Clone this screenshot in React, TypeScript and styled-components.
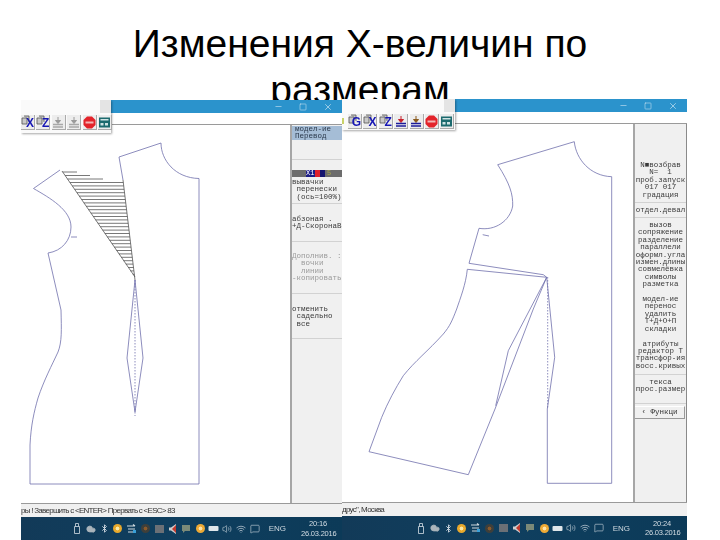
import type { ReactNode } from 'react';
import { Bluetooth, Cloud, MessageSquare, Minus, Square, Volume2, Wifi, X } from 'lucide-react';
import styled, { createGlobalStyle } from 'styled-components';

const GlobalStyle = createGlobalStyle`
    html, body {
        margin: 0;
        padding: 0;
        background: #fff;
        overflow: hidden;
    }
`;

const Slide = styled.div`
    width: 720px;
    height: 540px;
    overflow: hidden;
    font-family: "Liberation Sans", Arial, sans-serif;
`;

const Titre = styled.h1`
    margin: 0;
    padding: 21px 100px 0;
    height: 99px;
    box-sizing: border-box;
    font-size: 39px;
    line-height: 46px;
    font-weight: 400;
    text-align: center;
    color: #000;
`;

const Ecrans = styled.div`
    position: relative;
    display: flex;
    align-items: flex-end;
    height: 441px;
    padding-left: 21px;
`;

const Ecran = styled.div<{ $largeur: number; $hauteur: number }>`
    position: relative;
    display: flex;
    flex-direction: column;
    flex: none;
    width: ${({ $largeur }) => $largeur}px;
    height: ${({ $hauteur }) => $hauteur}px;
    overflow: hidden;
    background: #fff;
    filter: blur(0.35px);
`;

const BarreTitre = styled.div`
    flex: none;
    height: 13px;
    display: flex;
    justify-content: flex-end;
    align-items: center;
    gap: 16px;
    padding-right: 9px;
    background: #2b93cc;
    color: #dcecf6;
`;

const BarreMenu = styled.div`
    flex: none;
    height: 11px;
    background: #fff;
`;

const Travail = styled.div`
    flex: none;
    height: 380px;
    display: flex;
    border-top: 1px solid #9a9a9a;
    border-bottom: 1px solid #9a9a9a;
    box-sizing: border-box;
`;

const Canevas = styled.div`
    flex: 1;
    min-width: 0;
    background: #fff;
    svg {
        display: block;
    }
`;

const Panneau = styled.div<{ $bordDroit?: boolean }>`
    flex: none;
    width: ${({ $bordDroit }) => ($bordDroit ? 51 : 50)}px;
    display: flex;
    flex-direction: column;
    overflow: hidden;
    background: #f0f0f0;
    border-left: 2px solid #a6a6a6;
    border-right: ${({ $bordDroit }) => ($bordDroit ? '1px solid #8a8a8a' : 'none')};
    font-family: "Liberation Mono", monospace;
    font-size: 7.5px;
    line-height: 7.4px;
    color: #333;
`;

const Section = styled.div<{ $hauteur: number; $haut?: number; $centre?: boolean; $gris?: boolean; $sansLigne?: boolean }>`
    flex: none;
    box-sizing: border-box;
    height: ${({ $hauteur }) => $hauteur}px;
    padding-top: ${({ $haut = 0 }) => $haut}px;
    white-space: pre;
    text-align: ${({ $centre }) => ($centre ? 'center' : 'left')};
    color: ${({ $gris }) => ($gris ? '#9a9a9a' : '#3a3a3a')};
    border-bottom: ${({ $sansLigne }) => ($sansLigne ? 'none' : '1px solid #d2d2d2')};
`;

const Surligne = styled.div`
    height: 14px;
    margin-top: 1px;
    background: #a5bdd6;
    color: #2c3a4c;
    padding-left: 3px;
`;

const BarreCouleur = styled.div`
    display: flex;
    height: 7px;
    margin-bottom: 2px;
    background: #6c6c6c;
    padding-left: 14px;
    font-size: 7px;
    line-height: 7px;
`;

const Case = styled.span<{ $fond: string; $largeur: number }>`
    width: ${({ $largeur }) => $largeur}px;
    background: ${({ $fond }) => $fond};
    color: #fff;
`;

const Chiffre = styled.span`
    margin-left: 2px;
    color: #a8a84a;
`;

const BoutonFonctions = styled.div`
    height: 11px;
    margin: 2px 1px 0 0;
    line-height: 11px;
    text-align: center;
    background: #f0f0f0;
    border-right: 1px solid #999;
    border-bottom: 1px solid #999;
    border-top: 1px solid #fff;
`;

const Statut = styled.div`
    flex: none;
    height: 13px;
    line-height: 14px;
    background: #f0f0f0;
    font-size: 8px;
    letter-spacing: -0.73px;
    color: #333;
    white-space: pre;
    overflow: hidden;
`;

const BarreTaches = styled.div<{ $separateur?: boolean }>`
    flex: 1;
    display: flex;
    align-items: center;
    justify-content: flex-end;
    padding-right: ${({ $separateur }) => ($separateur ? 7 : 8)}px;
    background: linear-gradient(90deg, #123a58, #0f3f5f 50%, #0c3a58);
    color: #d4dde4;
`;

const Zone = styled.span`
    flex: none;
    width: 13.7px;
    display: flex;
    justify-content: center;
    align-items: center;
`;

const Pastille = styled.span<{ $couleur: string; $centre: string }>`
    width: 9px;
    height: 9px;
    border-radius: 50%;
    background: radial-gradient(circle, ${({ $centre }) => $centre} 25%, ${({ $couleur }) => $couleur} 35%);
`;

const Carre = styled.span<{ $couleur: string }>`
    width: 9px;
    height: 8px;
    background: ${({ $couleur }) => $couleur};
`;

const Langue = styled.span`
    margin-left: 7px;
    font-size: 8px;
    color: #cfd9e0;
`;

const Horloge = styled.div`
    width: 34px;
    margin-left: 15px;
    font-size: 7.5px;
    letter-spacing: -0.2px;
    line-height: 9.5px;
    text-align: center;
    color: #d4dde4;
    white-space: nowrap;
`;

const Flottant = styled.div<{ $largeur: number; $hauteur: number }>`
    position: absolute;
    top: 0;
    left: 0;
    width: ${({ $largeur }) => $largeur}px;
    height: ${({ $hauteur }) => $hauteur}px;
    background: #fafafa;
    box-shadow: 1px 1px 2px rgba(0, 0, 0, 0.35);
`;

const Poignee = styled.div`
    position: absolute;
    top: 0;
    right: 0;
    width: 11px;
    height: 13px;
    background: #e4e4e4;
`;

const Outils = styled.div<{ $retrait: number }>`
    position: absolute;
    top: 15px;
    left: ${({ $retrait }) => $retrait}px;
    display: flex;
    gap: 1.4px;
`;

const Reste = styled.div`
    position: absolute;
    top: 19px;
    left: 0;
    width: 2px;
    height: 6px;
    background: #c9d36a;
`;

const Outil = styled.div`
    position: relative;
    width: 14px;
    height: 15px;
    background: #ededed;
    border-right: 1px solid #aaa;
    border-bottom: 1px solid #aaa;
    box-sizing: border-box;
    display: flex;
    align-items: center;
    justify-content: center;
`;

const Lettre = styled.span`
    position: absolute;
    right: 0;
    bottom: 0;
    font-size: 12px;
    line-height: 12px;
    font-weight: 700;
    color: #1616b4;
`;

const Document = () => (
    <svg width="10" height="11" viewBox="0 0 10 11" style={{ position: 'absolute', left: 0, top: 0 }}>
        <path d="M1 3h5v6H1zM3 1h5v6" fill="#c9c9c9" stroke="#555" strokeWidth="0.8" />
    </svg>
);

const OutilLettre = ({ lettre }: { lettre: string }) => (
    <Outil>
        <Document />
        <Lettre>{lettre}</Lettre>
    </Outil>
);

const OutilTampon = ({ fleche, traits }: { fleche: string; traits: string }) => (
    <Outil>
        <svg width="12" height="13" viewBox="0 0 12 13">
            <path d="M6 1v4M3.5 4.5h5L6 7.5z" fill={fleche} stroke={fleche} strokeWidth="1" />
            <path d="M1 8.5h10M1 11h10" stroke={traits} strokeWidth="1.3" />
        </svg>
    </Outil>
);

const OutilStop = () => (
    <Outil>
        <svg width="13" height="13" viewBox="0 0 13 13">
            <path d="M4 .5h5L12.5 4v5L9 12.5H4L.5 9V4z" fill="#e3242b" />
            <rect x="2.5" y="5.5" width="8" height="2" fill="#f3b5b5" />
        </svg>
    </Outil>
);

const OutilCalcul = () => (
    <Outil>
        <svg width="11" height="11" viewBox="0 0 11 11">
            <rect width="11" height="10" y="0.5" fill="#1c6a6e" />
            <rect x="1.5" y="2" width="8" height="1.5" fill="#cfe3e3" />
            <rect x="1.5" y="6" width="3" height="2.5" fill="#cfe3e3" />
            <rect x="6" y="6" width="3" height="2.5" fill="#cfe3e3" />
        </svg>
    </Outil>
);

const Controles = () => (
    <>
        <Minus size={9} strokeWidth={1.5} />
        <Square size={8} strokeWidth={1.5} />
        <X size={10} strokeWidth={1.5} />
    </>
);

const Barres = () => (
    <>
        <Zone>
            <svg width="8" height="11" viewBox="0 0 8 11">
                <path d="M1.5 3.5h5v7h-5zM2.5 3.5V.5h3v3" fill="none" stroke="currentColor" strokeWidth="0.8" />
            </svg>
        </Zone>
        <Zone><Cloud size={10} fill="#aab4bb" stroke="#aab4bb" /></Zone>
        <Zone><Bluetooth size={9} strokeWidth={2.4} /></Zone>
        <Zone><Pastille $couleur="#e8a92c" $centre="#fbe9a6" /></Zone>
        <Zone>
            <svg width="11" height="10" viewBox="0 0 11 10">
                <path d="M1 2h8M9 2 7 .5M2 5h7M2 8h5" stroke="#cdd7dd" strokeWidth="1.2" fill="none" />
                <rect x="7" y="6" width="3" height="3" fill="#3aa0d8" />
            </svg>
        </Zone>
        <Zone><Pastille $couleur="#3f3f3a" $centre="#8a5a2c" /></Zone>
        <Zone><Carre $couleur="#6b7076" /></Zone>
        <Zone>
            <svg width="8" height="10" viewBox="0 0 8 10">
                <path d="M7 0v10L2 6.5H0v-3h2z" fill="#cfcfcf" />
                <path d="M7 1v8L3 5z" fill="#c23a2e" />
            </svg>
        </Zone>
        <Zone>
            <svg width="10" height="10" viewBox="0 0 10 10">
                <path d="M1 1h8v6H4L2 9V7H1z" fill="#7b8a78" />
            </svg>
        </Zone>
        <Zone><Pastille $couleur="#eeaa35" $centre="#fde3a8" /></Zone>
        <Zone>
            <svg width="11" height="7" viewBox="0 0 11 7">
                <rect x="0.5" y="1" width="10" height="5" rx="1" fill="#dfe6ea" />
            </svg>
        </Zone>
        <Zone><Volume2 size={10} strokeWidth={1.4} /></Zone>
        <Zone><Wifi size={10} strokeWidth={1.6} /></Zone>
        <Zone><MessageSquare size={10} strokeWidth={1.4} /></Zone>
        <Langue>ENG</Langue>
    </>
);

type TachesProps = { heure: string; separateur?: boolean };

const Taches = ({ heure, separateur }: TachesProps) => (
    <BarreTaches $separateur={separateur}>
        <Barres />
        <Horloge>
            {heure}
            <br />
            26.03.2016
        </Horloge>
    </BarreTaches>
);

const TRAIT = '#7070ac';

// hachures de la pince : bord gauche (62,171)-(134,276), bord droit (123,180)-(135,280)
const hachures = () => {
    const lignes: ReactNode[] = [];
    const courts: [number, number][] = [[172, 77], [175.5, 90], [179, 103]];
    courts.forEach(([y, fin]) => {
        const debut = 62 + ((y - 171) * 72) / 105;
        lignes.push(<line key={`c${y}`} x1={debut} y1={y} x2={fin} y2={y} />);
    });
    for (let y = 182.5; y < 276; y += 3.4) {
        const debut = 62 + ((y - 171) * 72) / 105;
        const fin = 123 + ((y - 180) * 12) / 100;
        lignes.push(<line key={y} x1={debut} y1={y} x2={fin} y2={y} />);
    }
    return lignes;
};

const PatronGauche = () => (
    <svg width="267" height="378" viewBox="21 125 267 378">
        <g fill="none" stroke={TRAIT} strokeWidth="0.8">
            <path d="M123 180 119 157 161 143C161 160 175 178 199 178.500V484H30V445C31 425 34 412 38 398C44 380 52 365 58 352C62 342 61.500 330 61 310L48 253C62 251 71 240 71 227C71 210 50 198 33.500 188.500L60 170" />
            <path d="M71 237h6" />
            <path d="M135 280 127 358 135 412 143 358z" />
            <path d="M135 280V416" strokeDasharray="1.500 1.500" />
        </g>
        <g stroke="#555" strokeWidth="0.8">
            {hachures()}
            <path d="M62 171 135 277M123 180 135 280" />
        </g>
    </svg>
);

const PatronDroit = () => (
    <svg width="291" height="378" viewBox="342 125 291 378">
        <g fill="none" stroke={TRAIT} strokeWidth="0.8">
            <path d="M574.300 142.700C576 160 590 177 611.700 177.700V484.300H547.300V410L554.700 358.300 546.700 278.300" />
            <path d="M574.300 142.700 497.700 165.700C510 185 513 195 512.700 207C510 222 495 232 479 229.300L469 264.300 543.300 275.700 546.700 278.300 467.300 270.300" />
            <path d="M467.300 270.300C466 285 460 300 456.700 310C452 322 450 327 443.300 335C428 352 415 362 403.300 376.700C395 390 388 403 381.700 418.300L369 452.700 468.300 475.700 495 410 533.300 310 546.700 278.300" />
            <path d="M546.700 278.300 508.300 351.700 495.700 406.700" />
            <path d="M482.700 235.700 489 237" />
            <path d="M547.700 278V410" strokeDasharray="1.500 1.500" />
        </g>
    </svg>
);

const App = () => (
    <Slide>
        <GlobalStyle />
        <Titre>Изменения Х-величин по размерам</Titre>
        <Ecrans>
            <Ecran $largeur={321} $hauteur={440}>
                <BarreTitre>
                    <Controles />
                </BarreTitre>
                <BarreMenu />
                <Travail>
                    <Canevas>
                        <PatronGauche />
                    </Canevas>
                    <Panneau>
                        <Section $hauteur={35}>
                            <Surligne>{'модел-ие\nПеревод'}</Surligne>
                        </Section>
                        <Section $hauteur={44} $haut={10}>
                            <BarreCouleur>
                                <Case $fond="#1c1c86" $largeur={9}>X1</Case>
                                <Case $fond="#e0202c" $largeur={5} />
                                <Case $fond="#14146e" $largeur={5} />
                                <Chiffre>5</Chiffre>
                            </BarreCouleur>
                            {'вывачки\n перенески\n (ось=100%)'}
                        </Section>
                        <Section $hauteur={38} $haut={12}>
                            {'абзоная .\n+Д-СкоронаВ'}
                        </Section>
                        <Section $hauteur={52} $haut={11} $gris>
                            {'Дополнив. :\n  вочки\n  линии\n-копировать'}
                        </Section>
                        <Section $hauteur={45} $haut={12}>
                            {'отменить\n садельно\n все'}
                        </Section>
                        <Section $hauteur={0} $sansLigne />
                    </Panneau>
                </Travail>
                <Statut>ры ! Завершить с &lt;ENTER&gt; Прервать с &lt;ESC&gt; 83</Statut>
                <Taches heure="20:16" separateur />
                <Flottant $largeur={90} $hauteur={33}>
                    <Poignee />
                    <Outils $retrait={0}>
                        <OutilLettre lettre="X" />
                        <OutilLettre lettre="Z" />
                        <OutilTampon fleche="#9a9a9a" traits="#a8a8a8" />
                        <OutilTampon fleche="#9a9a9a" traits="#a8a8a8" />
                        <OutilStop />
                        <OutilCalcul />
                    </Outils>
                </Flottant>
            </Ecran>
            <Ecran $largeur={345} $hauteur={441}>
                <BarreTitre>
                    <Controles />
                </BarreTitre>
                <BarreMenu />
                <Travail>
                    <Canevas>
                        <PatronDroit />
                    </Canevas>
                    <Panneau $bordDroit>
                        <Section $hauteur={34} $sansLigne />
                        <Section $hauteur={45} $haut={4} $centre>
                            {'N■возбрав\nN=  1\nпроб.запуск\n017 017\nградация'}
                        </Section>
                        <Section $hauteur={15} $haut={4} $centre>
                            отдел.девал
                        </Section>
                        <Section $hauteur={157} $haut={4} $centre>
                            {'вызов\nсопряжение\nразделение\nпараллели\nоформл.угла\nизмен.длины\nсовмелёвка\nсимволы\nразметка\n\nмодел-ие\nперенос\nудалить\nТ+Д+О+П\nскладки\n\nатрибуты\nредактор Т\nтрансфор-ия\nвосс.кривых'}
                        </Section>
                        <Section $hauteur={29} $haut={4} $centre>
                            {'текса\nпрос.размер'}
                        </Section>
                        <BoutonFonctions>‹ Функци</BoutonFonctions>
                    </Panneau>
                </Travail>
                <Statut>друс", Москва</Statut>
                <Taches heure="20:24" />
                <Flottant $largeur={113} $hauteur={31}>
                    <Poignee />
                    <Reste />
                    <Outils $retrait={6}>
                        <OutilLettre lettre="G" />
                        <OutilLettre lettre="X" />
                        <OutilLettre lettre="Z" />
                        <OutilTampon fleche="#c8202a" traits="#1c1c9a" />
                        <OutilTampon fleche="#8a5a1c" traits="#1c1c9a" />
                        <OutilStop />
                        <OutilCalcul />
                    </Outils>
                </Flottant>
            </Ecran>
        </Ecrans>
    </Slide>
);

export default App;
